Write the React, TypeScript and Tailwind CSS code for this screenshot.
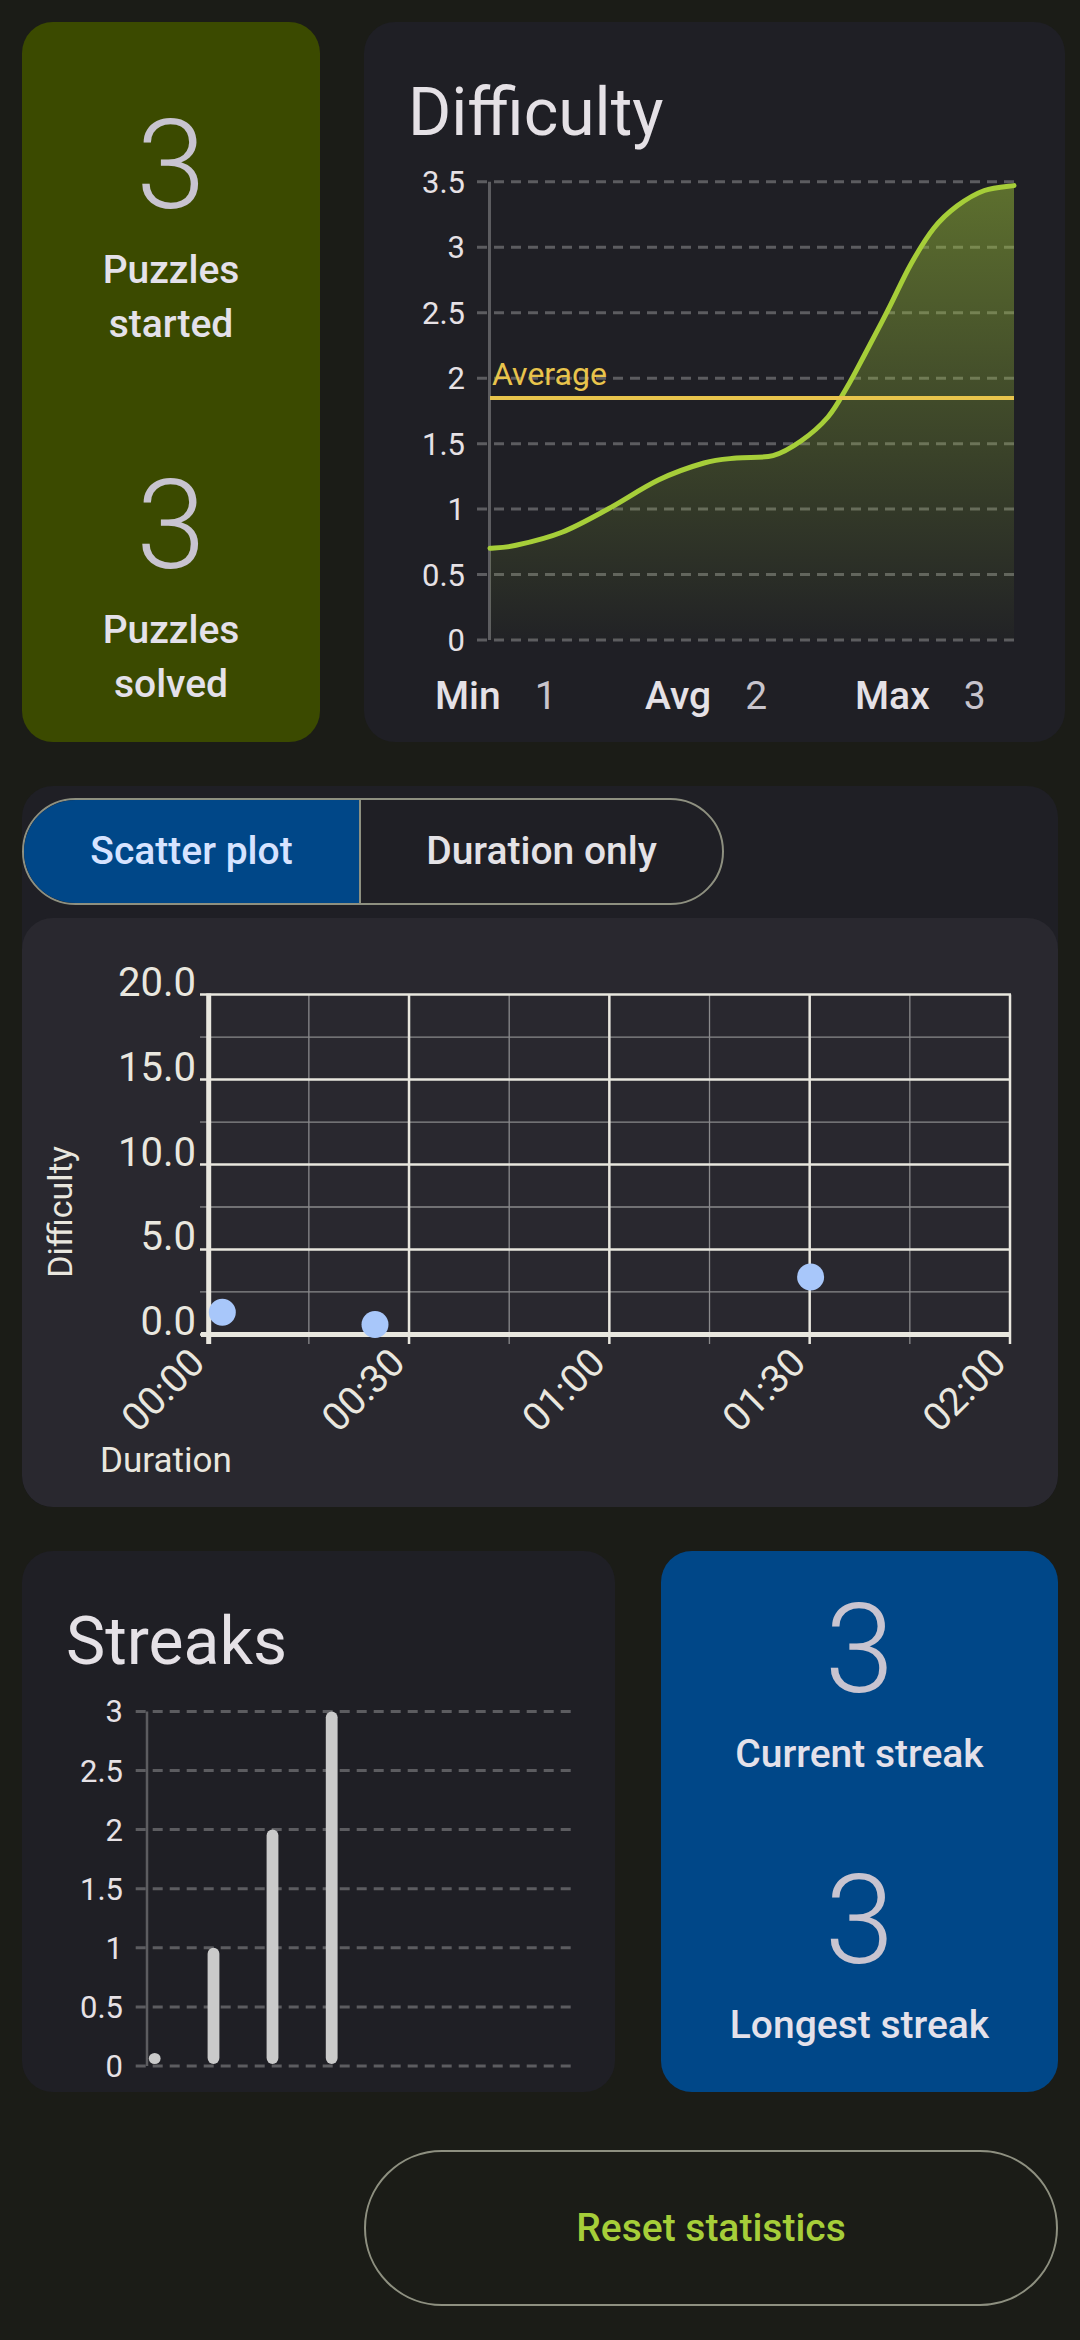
import React from 'react';

type Pt = [number, number];

const lime = '#a6ce39';

// catmull-rom through measured points -> cubic path
function smoothPath(pts: Pt[]) {
  let d = `M${pts[0][0]},${pts[0][1]}`;
  for (let i = 0; i < pts.length - 1; i++) {
    const p0 = pts[i - 1] ?? pts[i];
    const p1 = pts[i];
    const p2 = pts[i + 1];
    const p3 = pts[i + 2] ?? p2;
    const c1x = p1[0] + (p2[0] - p0[0]) / 6;
    const c1y = p1[1] + (p2[1] - p0[1]) / 6;
    const c2x = p2[0] - (p3[0] - p1[0]) / 6;
    const c2y = p2[1] - (p3[1] - p1[1]) / 6;
    d += ` C${c1x.toFixed(1)},${c1y.toFixed(1)} ${c2x.toFixed(1)},${c2y.toFixed(1)} ${p2[0]},${p2[1]}`;
  }
  return d;
}

function StatBlock({ value, label, className }: { value: string; label: string; className: string }) {
  return (
    <div className={`flex flex-col items-center ${className}`}>
      <span className="text-[125px] leading-none font-light text-[#c8c4d0]">{value}</span>
      <span className="mt-[15px] text-center text-[39px] leading-[54px] font-medium text-[#e4e1ea]">{label}</span>
    </div>
  );
}

const diffCurve: Pt[] = [
  [126, 402.2], [152, 399.3], [198, 386.2], [244, 363], [294.4, 334], [340, 317],
  [372.5, 312], [409, 309.6], [437, 295], [464, 271], [482.7, 241.8], [501, 208],
  [524, 164], [547, 118], [570, 82], [593, 60], [620.4, 44.5], [650, 39.6],
];

function DifficultyChart() {
  const yOf = (v: number) => 494 - v * 130.9;
  const ticks = [3.5, 3, 2.5, 2, 1.5, 1, 0.5, 0];
  const line = smoothPath(diffCurve);
  const area = `${line} L650,${yOf(0)} L126,${yOf(0)} Z`;
  return (
    <svg width="694" height="528" className="block">
      <defs>
        <linearGradient id="diffFill" x1="0" y1="39" x2="0" y2="494" gradientUnits="userSpaceOnUse">
          <stop offset="0" stopColor={lime} stopOpacity="0.46" />
          <stop offset="1" stopColor={lime} stopOpacity="0.02" />
        </linearGradient>
      </defs>
      {ticks.map((v) => (
        <g key={v}>
          <line x1="113" x2="650" y1={yOf(v)} y2={yOf(v)} stroke="#5c5c60" strokeWidth="3" strokeDasharray="10 7" />
          <text x="101" y={yOf(v) + 11} textAnchor="end" fontSize="31" fill="#e6e1e5">{v}</text>
        </g>
      ))}
      <line x1="125.5" x2="125.5" y1={yOf(3.5)} y2={yOf(0)} stroke="#5c5c60" strokeWidth="3" />
      <path d={area} fill="url(#diffFill)" />
      <path d={line} fill="none" stroke={lime} strokeWidth="5" strokeLinecap="round" />
      <line x1="126" x2="650" y1="252" y2="252" stroke="#e8c44c" strokeWidth="4" />
      <text x="128" y="239" fontSize="32" fill="#e8c44c">Average</text>
    </svg>
  );
}

function ScatterChart() {
  const L = 186.7, R = 988, T = 76.6, B = 416.4;
  const xs = [0, 1, 2, 3, 4].map((i) => L + (i * (R - L)) / 4);
  const ys = [0, 1, 2, 3, 4].map((i) => T + (i * (B - T)) / 4);
  const xm = xs.slice(0, 4).map((x) => x + (R - L) / 8);
  const ym = ys.slice(0, 4).map((y) => y + (B - T) / 8);
  const major = '#e9e7df';
  const minor = '#8a8a8c';
  const yLabels = ['20.0', '15.0', '10.0', '5.0', '0.0'];
  const xLabels = ['00:00', '00:30', '01:00', '01:30', '02:00'];
  const points: Pt[] = [[200.3, 394.3], [353, 406.5], [788.6, 359]];
  return (
    <svg width="1035" height="589" className="block">
      {xm.map((x) => (
        <g key={`mx${x}`}>
          <line x1={x} x2={x} y1={T} y2={B} stroke={minor} strokeWidth="1.3" />
          <line x1={x} x2={x} y1={B} y2={426} stroke={minor} strokeWidth="1.3" />
        </g>
      ))}
      {ym.map((y) => (
        <g key={`my${y}`}>
          <line x1={L} x2={R} y1={y} y2={y} stroke={minor} strokeWidth="1.3" />
          <line x1="178" x2={L} y1={y} y2={y} stroke={minor} strokeWidth="1.3" />
        </g>
      ))}
      {xs.map((x) => (
        <line key={`x${x}`} x1={x} x2={x} y1={T} y2={426} stroke={major} strokeWidth="2.5" />
      ))}
      {ys.map((y) => (
        <line key={`y${y}`} x1="178" x2={R + 1} y1={y} y2={y} stroke={major} strokeWidth="2.5" />
      ))}
      <line x1={L} x2={L} y1={T - 1} y2="426" stroke={major} strokeWidth="5" />
      <line x1="179" x2={R + 1} y1={B} y2={B} stroke={major} strokeWidth="5" />
      {yLabels.map((t, i) => (
        <text key={t} x="174" y={ys[i] + 1} textAnchor="end" fontSize="40" fill={major}>{t}</text>
      ))}
      {xLabels.map((t, i) => (
        <text
          key={t}
          x={xs[i] - 2}
          y="447"
          textAnchor="end"
          fontSize="39"
          fill={major}
          transform={`rotate(-45 ${xs[i] - 2} 447)`}
        >
          {t}
        </text>
      ))}
      {points.map(([x, y]) => (
        <circle key={x} cx={x} cy={y} r="13.5" fill="#a8c7fa" />
      ))}
      <text x="50" y="294" textAnchor="middle" fontSize="34" fill={major} transform="rotate(-90 50 294)">Difficulty</text>
      <text x="78" y="554" fontSize="35" fill={major}>Duration</text>
    </svg>
  );
}

function StreakChart() {
  const yOf = (v: number) => 391 - v * 118.2;
  const ticks = [3, 2.5, 2, 1.5, 1, 0.5, 0];
  const bars = [
    { x: 132.7, v: 0 },
    { x: 191.5, v: 1 },
    { x: 250.5, v: 2 },
    { x: 309.7, v: 3 },
  ];
  return (
    <svg width="593" height="417" className="block">
      {ticks.map((v) => (
        <g key={v}>
          <line x1="113.7" x2="551" y1={yOf(v)} y2={yOf(v)} stroke="#5c5c60" strokeWidth="3" strokeDasharray="10 7" />
          <text x="101" y={yOf(v) + 11} textAnchor="end" fontSize="31" fill="#e6e1e5">{v}</text>
        </g>
      ))}
      <line x1="125" x2="125" y1={yOf(3)} y2={yOf(0)} stroke="#5c5c60" strokeWidth="2.5" />
      {bars.map(({ x, v }) => {
        const top = v === 0 ? yOf(0) - 13 : yOf(v);
        return <rect key={x} x={x - 5.9} y={top} width="11.8" height={yOf(0) - 2 - top} rx="5.9" fill="#cacaca" />;
      })}
    </svg>
  );
}

export default function App() {
  return (
    <div className="h-[2340px] w-[1080px] overflow-hidden bg-[#1b1c17] px-[22px] pt-[22px] font-['Roboto',sans-serif]">
      {/* top row */}
      <div className="grid h-[720px] grid-cols-[298px_1fr] gap-[44px]">
        <div className="flex flex-col rounded-[31px] bg-[#3b4a00] px-[40px]">
          <StatBlock value="3" label="Puzzles started" className="h-[360px] pt-[81px]" />
          <StatBlock value="3" label="Puzzles solved" className="h-[360px] pt-[81px]" />
        </div>

        <div className="flex flex-col rounded-[31px] bg-[#1f1f25]">
          <h2 className="h-[124px] pl-[44px] pt-[58px] text-[66px] leading-none font-normal text-[#e5e1e6]">Difficulty</h2>
          <DifficultyChart />
          <div className="mt-[3px] grid grid-cols-[210px_210px_210px] pl-[71px] text-[39px] leading-[39px]">
            {[['Min', '1'], ['Avg', '2'], ['Max', '3']].map(([k, v]) => (
              <div key={k} className="flex gap-[34px]">
                <span className="font-medium text-[#e5e1e6]">{k}</span>
                <span className="text-[#c8c4cc]">{v}</span>
              </div>
            ))}
          </div>
        </div>
      </div>

      {/* scatter section */}
      <div className="mt-[44px] overflow-hidden rounded-[31px] bg-[#1f1f25] pt-[12px]">
        <div className="flex h-[107px] w-[702px] overflow-hidden rounded-full border-2 border-[#8e9080] text-[39px] font-medium">
          <button className="flex w-[335px] items-center justify-center bg-[#004788] text-[#d6e3ff]">Scatter plot</button>
          <button className="flex w-[363px] items-center justify-center border-l-2 border-[#8e9080] text-[#e4e2e6]">Duration only</button>
        </div>
        <div className="mt-[13px] h-[589px] rounded-[31px] bg-[#29282f]">
          <ScatterChart />
        </div>
      </div>

      {/* streaks row */}
      <div className="mt-[44px] grid h-[541px] grid-cols-[593px_1fr] gap-[46px]">
        <div className="flex flex-col rounded-[31px] bg-[#1f1f25]">
          <h2 className="h-[124px] pl-[44px] pt-[58px] text-[66px] leading-none font-normal text-[#e5e1e6]">Streaks</h2>
          <StreakChart />
        </div>
        <div className="flex flex-col rounded-[31px] bg-[#004788]">
          <StatBlock value="3" label="Current streak" className="flex-1 pt-[36px]" />
          <StatBlock value="3" label="Longest streak" className="flex-1 pt-[36px]" />
        </div>
      </div>

      <div className="mt-[58px] flex justify-end">
        <button className="h-[156px] w-[694px] rounded-full border-2 border-[#8e9080] text-[39px] font-medium text-[#a6ce39]">
          Reset statistics
        </button>
      </div>
    </div>
  );
}
